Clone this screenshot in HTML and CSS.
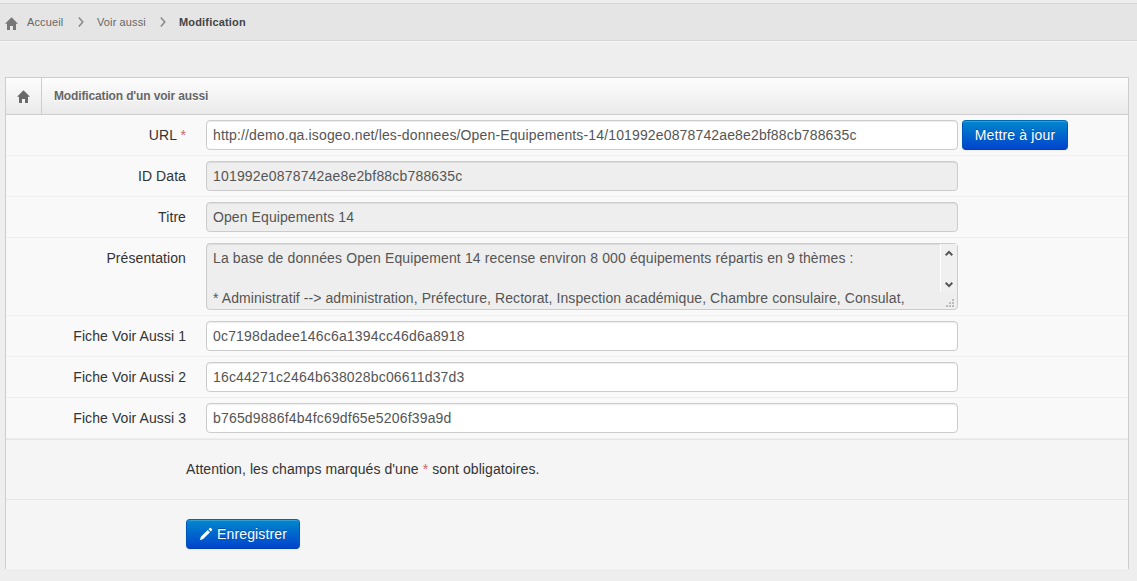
FILE: index.html
```html
<!DOCTYPE html>
<html lang="fr">
<head>
<meta charset="utf-8">
<title>Modification d'un voir aussi</title>
<link rel="stylesheet" href="styles.css">
</head>
<body>
<nav class="breadcrumb">
  <svg class="home" width="13" height="13" viewBox="0 0 13 13"><path d="M6.5 0.3L13 6.8H11V13H8V9H5V13H2V6.8H0Z"/></svg>
  <a class="crumb">Accueil</a>
  <svg class="chevron" width="6" height="10" viewBox="0 0 6 10"><path d="M.8 .5L4.8 5L.8 9.5"/></svg>
  <a class="crumb crumb-second">Voir aussi</a>
  <svg class="chevron" width="6" height="10" viewBox="0 0 6 10"><path d="M.8 .5L4.8 5L.8 9.5"/></svg>
  <a class="crumb current">Modification</a>
</nav>
<main class="widget">
  <header class="widget-title">
    <span class="widget-icon"><svg class="home" width="13" height="13" viewBox="0 0 13 13"><path d="M6.5 0.3L13 6.8H11V13H8V9H5V13H2V6.8H0Z"/></svg></span>
    <h5>Modification d'un voir aussi</h5>
  </header>
  <form>
    <div class="row"><label>URL <span class="required">*</span></label><input class="field url" type="text" value="http://demo.qa.isogeo.net/les-donnees/Open-Equipements-14/101992e0878742ae8e2bf88cb788635c"><button class="btn update" type="button">Mettre à jour</button></div>
    <div class="row"><label>ID Data</label><input class="field readonly identifier" type="text" readonly value="101992e0878742ae8e2bf88cb788635c"></div>
    <div class="row"><label>Titre</label><input class="field readonly" type="text" readonly value="Open Equipements 14"></div>
    <div class="row"><label>Présentation</label>
      <div class="field readonly area">
        <div class="area-text"><p class="first">La base de données Open Equipement 14 recense environ 8 000 équipements répartis en 9 thèmes :</p><p class="second">* Administratif --&gt; administration, Préfecture, Rectorat, Inspection académique, Chambre consulaire, Consulat,</p></div>
        <div class="scroll">
          <div class="track">
            <svg width="8" height="7" viewBox="0 0 8 7"><path d="M.7 5.2L4 1.9L7.3 5.2"/></svg>
            <svg width="8" height="7" viewBox="0 0 8 7"><path d="M.7 1.8L4 5.1L7.3 1.8"/></svg>
          </div>
          <svg class="grip" width="8" height="8" viewBox="0 0 8 8"><path d="M6 0h2v2h-2zM3 3h2v2h-2zM6 3h2v2h-2zM0 6h2v2h-2zM3 6h2v2h-2zM6 6h2v2h-2z"/></svg>
        </div>
      </div>
    </div>
    <div class="row"><label>Fiche Voir Aussi 1</label><input class="field identifier" type="text" value="0c7198dadee146c6a1394cc46d6a8918"></div>
    <div class="row"><label>Fiche Voir Aussi 2</label><input class="field identifier" type="text" value="16c44271c2464b638028bc06611d37d3"></div>
    <div class="row"><label>Fiche Voir Aussi 3</label><input class="field identifier" type="text" value="b765d9886f4b4fc69df65e5206f39a9d"></div>
    <div class="actions note"><p>Attention, les champs marqués d'une <span class="required">*</span> sont obligatoires.</p></div>
    <div class="actions last"><button class="btn save" type="button"><svg width="14" height="14" viewBox="0 0 14 14"><path d="M.8 13.2L1.9 9.8L8.7 3L11 5.3L4.2 12.1ZM9.5 2.2L10.7 1Q11.3.6 11.9 1.1L12.9 2.1Q13.4 2.7 13 3.3L11.8 4.5Z"/></svg>Enregistrer</button></div>
  </form>
</main>
</body>
</html>
```
FILE: styles.css
```css
* { box-sizing: border-box; }
body {
  margin: 0;
  padding-top: 3px;
  background: #eee;
  color: #333;
  font: 14px/20px "Liberation Sans", Arial, sans-serif;
  overflow: hidden;
}
p, h5 { margin: 0; }
.breadcrumb {
  display: flex;
  align-items: center;
  height: 38px;
  padding-left: 5px;
  background: #e5e5e5;
  border-top: 1px solid #d6d6d6;
  border-bottom: 1px solid #d6d6d6;
  box-shadow: 0 1px 0 #f6f6f6;
  font-size: 11px;
  letter-spacing: .12px;
  color: #666;
}
.home { display: block; fill: #6a6a6a; }
.breadcrumb .home { margin: 2px 9px 0 0; fill: #777; }
.crumb { width: 51px; white-space: nowrap; }
.crumb-second { width: 63px; }
.current { width: auto; color: #444; font-weight: bold; letter-spacing: .17px; }
.chevron { margin-right: 13px; fill: none; stroke: #888; stroke-width: 1.5; }
.widget {
  width: 1124px;
  height: 492px;
  margin: 36px 0 0 5px;
  background: #f9f9f9;
  border: 1px solid #cdcdcd;
  border-bottom: 0;
}
.widget-title {
  display: flex;
  height: 37px;
  border-bottom: 1px solid #cdcdcd;
  background: linear-gradient(#fdfdfd, #eaeaea);
}
.widget-icon {
  width: 36px;
  padding: 12px 0 0 11px;
  border-right: 1px solid #cdcdcd;
}
h5 {
  padding: 12px;
  font-size: 12px;
  line-height: 12px;
  letter-spacing: -.14px;
  color: #666;
  text-shadow: 0 1px 0 #fff;
}
.row {
  display: flex;
  padding: 5px 0;
  border-bottom: 1px solid #eee;
}
label { width: 180px; margin-right: 20px; padding-top: 5px; text-align: right; letter-spacing: .08px; }
.required { color: #c66; }
.field {
  width: 752px;
  height: 30px;
  padding: 4px 6px;
  border: 1px solid #ccc;
  border-radius: 4px;
  background: #fff;
  box-shadow: inset 0 1px 1px rgba(0, 0, 0, .075);
  font: inherit;
  letter-spacing: .09px;
  color: #555;
}
.url { letter-spacing: .145px; }
.identifier { letter-spacing: .18px; }
.readonly { background: #eee; }
.area { display: flex; height: 67px; padding: 0 0 0 6px; }
.area-text { flex: 1; padding-top: 4px; white-space: nowrap; }
.first { letter-spacing: .125px; }
.second { margin-top: 20px; letter-spacing: .08px; }
.scroll { width: 17px; }
.track {
  display: flex;
  flex-direction: column;
  justify-content: space-between;
  height: 48px;
  padding: 6px 0 4px 3.5px;
  border-left: 1px solid #fff;
  background: #f0f0f0;
}
.track svg { fill: none; stroke: #555; stroke-width: 2; }
.grip { display: block; margin: 7px 0 0 6px; fill: #bbb; }
.btn {
  height: 30px;
  padding: 4px 11px;
  border: 1px solid;
  border-color: #0067b0 #05b #0040b3;
  border-radius: 4px;
  background: linear-gradient(#08c, #04c);
  box-shadow: inset 0 1px 0 rgba(255, 255, 255, .2), 0 1px 2px rgba(0, 0, 0, .05);
  color: #fff;
  font: inherit;
  letter-spacing: .15px;
  text-shadow: 0 -1px 0 rgba(0, 0, 0, .25);
  white-space: nowrap;
}
.update { width: 106px; margin-left: 4px; }
.save { display: flex; align-items: center; width: 114px; padding-left: 12px; }
.save svg { flex: none; margin-right: 4px; fill: #fff; }
.actions {
  padding: 19px 0 20px 180px;
  border-top: 1px solid #e5e5e5;
  background: #f5f5f5;
}
.note { height: 60px; letter-spacing: .08px; }
.last { height: 70px; }
```
